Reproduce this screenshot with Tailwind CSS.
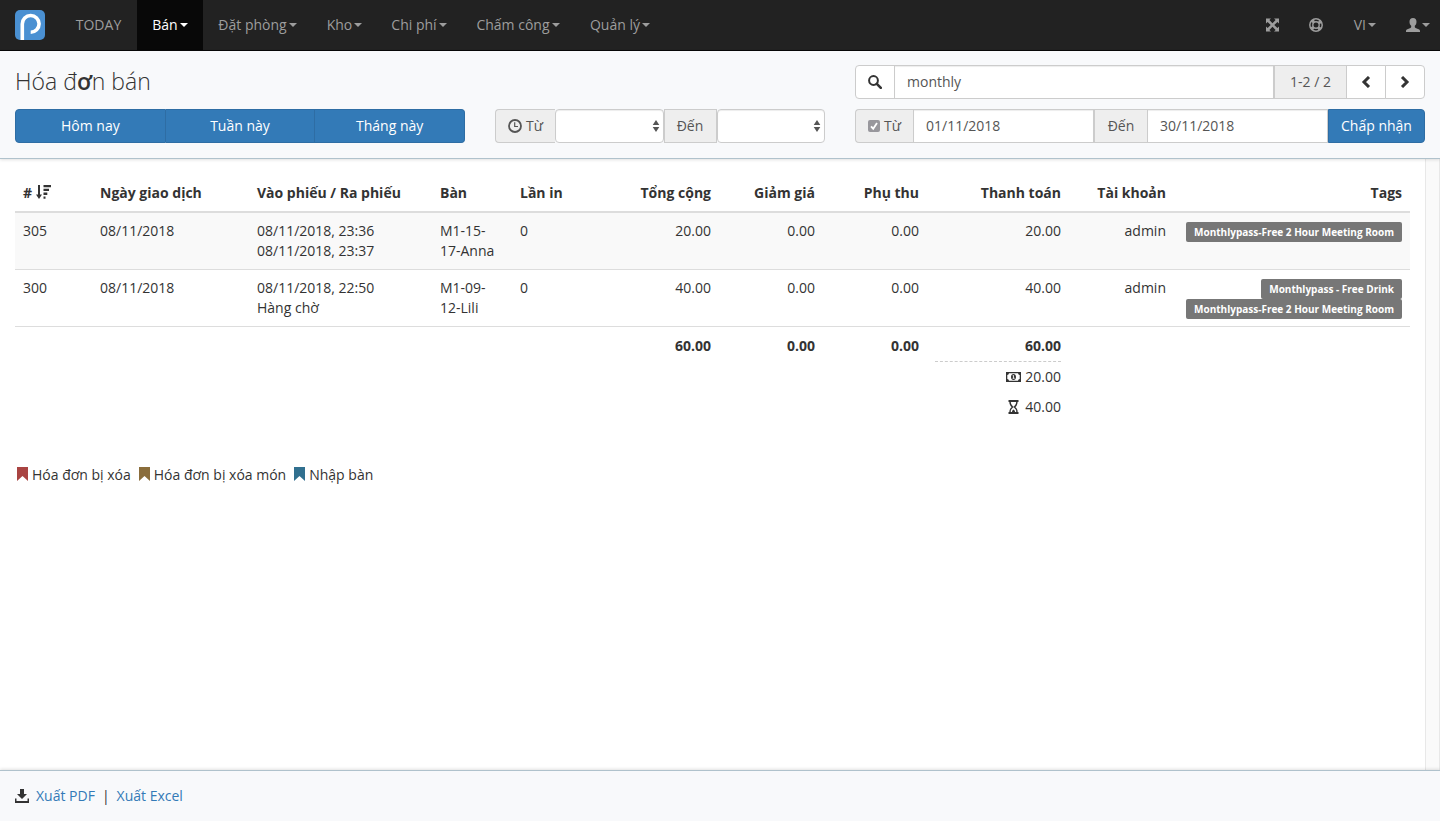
<!DOCTYPE html>
<html lang="vi">
<head>
<meta charset="utf-8">
<meta name="viewport" content="width=device-width, initial-scale=1">
<title>Hóa đơn bán</title>
<script src="https://cdn.jsdelivr.net/npm/@tailwindcss/browser@4"></script>
</head>
<body class="flex h-screen flex-col overflow-hidden bg-white font-['Open_Sans','Noto_Sans',sans-serif] text-sm leading-5 text-[#333]">
<svg class="hidden">
  <symbol id="caret" viewBox="0 0 8 4"><path d="M0 0h8L4 4z"/></symbol>
  <symbol id="sorter" viewBox="0 0 8 12"><path d="M4 0l3.3 5H.7zM.7 7h6.6L4 12z"/></symbol>
  <symbol id="bookmark" viewBox="0 0 11 14"><path d="M0 0h11v14L5.500 9 0 14z"/></symbol>
</svg>

<nav class="flex h-[51px] shrink-0 border-b border-[#080808] bg-[#222] text-[#9d9d9d]">
  <a href="#" class="px-[15px] py-2.5" aria-label="Trang chủ">
    <svg class="size-[30px]" viewBox="0 0 30 30"><rect width="30" height="30" rx="5" fill="#4a90d2"/><path d="M7.300 30V14a8.400 8.400 0 1 1 8.400 8.300" fill="none" stroke="#fff" stroke-width="3.600"/></svg>
  </a>
  <a href="#" class="flex h-[50px] w-[77px] items-center justify-center">TODAY</a>
  <a href="#" class="flex h-[50px] w-[66px] items-center justify-center gap-0.5 bg-[#080808] text-white">Bán<svg class="h-1 w-2 fill-current"><use href="#caret"/></svg></a>
  <a href="#" class="flex h-[50px] w-[109px] items-center justify-center gap-0.5">Đặt phòng<svg class="h-1 w-2 fill-current"><use href="#caret"/></svg></a>
  <a href="#" class="flex h-[50px] w-[65px] items-center justify-center gap-0.5">Kho<svg class="h-1 w-2 fill-current"><use href="#caret"/></svg></a>
  <a href="#" class="flex h-[50px] w-[84px] items-center justify-center gap-0.5">Chi phí<svg class="h-1 w-2 fill-current"><use href="#caret"/></svg></a>
  <a href="#" class="flex h-[50px] w-[114px] items-center justify-center gap-0.5">Chấm công<svg class="h-1 w-2 fill-current"><use href="#caret"/></svg></a>
  <a href="#" class="flex h-[50px] w-[90px] items-center justify-center gap-0.5">Quản lý<svg class="h-1 w-2 fill-current"><use href="#caret"/></svg></a>
  <div class="ml-auto flex h-[50px] items-center">
    <a href="#" class="px-[15px]" aria-label="Toàn màn hình"><svg class="h-3.5 w-[13px]" viewBox="0 0 13 13"><path fill="currentColor" d="M0 0h5L3.400 1.600 6.500 4.700l3.100-3.100L8 0h5v5l-1.600-1.600-3.100 3.100 3.100 3.100L13 8v5H8l1.600-1.600-3.100-3.100-3.100 3.100L5 13H0V8l1.600 1.600 3.100-3.100-3.100-3.100L0 5z"/></svg></a>
    <a href="#" class="px-[15px]" aria-label="Trợ giúp"><svg class="size-3.5" viewBox="0 0 14 14" fill="none" stroke="currentColor"><circle cx="7" cy="7" r="6.200" stroke-width="1.500"/><circle cx="7" cy="7" r="3.200" stroke-width="1.400"/><circle cx="7" cy="7" r="4.700" stroke-width="2.800" stroke-dasharray="3 4.383" stroke-dashoffset="-2.200"/></svg></a>
    <a href="#" class="flex w-[38px] items-center justify-end gap-0.5">VI<svg class="h-1 w-2 fill-current"><use href="#caret"/></svg></a>
    <a href="#" class="flex w-[64px] items-center justify-end gap-0.5 pr-2.5" aria-label="Tài khoản"><svg class="size-3.5 fill-current" viewBox="0 0 14 14"><path d="M7 0c2.300 0 3.500 1.600 3.500 3.700 0 1.700-.6 3.300-1.700 4.100v1.100c0 .5.300.8.800 1l3 1.300c.9.400 1.400.9 1.400 1.800v1H0v-1c0-.9.500-1.400 1.400-1.800l3-1.300c.5-.2.8-.5.8-1V7.800C4.100 7 3.500 5.400 3.500 3.700 3.500 1.600 4.700 0 7 0z"/></svg><svg class="h-1 w-2 fill-current"><use href="#caret"/></svg></a>
  </div>
</nav>

<header class="relative z-10 grid shrink-0 grid-cols-12 gap-y-2.5 border-b border-[#b0c2cc] bg-[#f8f9fb] pt-3.5 pb-[15px] shadow-[0_1px_3px_rgba(0,0,0,0.12)]">
  <h1 class="col-span-7 px-[15px] text-[23px] leading-8 font-light">Hóa đ<span class="font-semibold">ơ</span>n bán</h1>
  <div class="col-span-5 flex h-[34px] px-[15px]">
    <button class="flex w-10 items-center justify-center rounded-l border border-[#ccc] bg-white" aria-label="Tìm"><svg class="size-3.5" viewBox="0 0 14 14" fill="none" stroke="#333"><circle cx="5.500" cy="5.500" r="4.400" stroke-width="2"/><path d="M8.800 8.800l4 4" stroke-width="2.600" stroke-linecap="round"/></svg></button>
    <input aria-label="Từ khóa" value="monthly" class="-ml-px min-w-0 flex-1 border border-[#ccc] bg-white px-3 text-[#555] shadow-[inset_0_1px_1px_rgba(0,0,0,0.075)]">
    <span class="flex w-[72px] items-center justify-center border-y border-l border-[#ccc] bg-[#eee] text-[#555]">1-2 / 2</span>
    <button class="flex w-10 items-center justify-center border border-[#ccc] bg-white" aria-label="Trang trước"><svg class="h-3 w-2.5" viewBox="0 0 10 12" fill="none" stroke="#333" stroke-width="3"><path d="M8 1L3 6l5 5"/></svg></button>
    <button class="-ml-px flex w-10 items-center justify-center rounded-r border border-[#ccc] bg-white" aria-label="Trang sau"><svg class="h-3 w-2.5" viewBox="0 0 10 12" fill="none" stroke="#333" stroke-width="3"><path d="M2 1l5 5-5 5"/></svg></button>
  </div>
  <div class="col-span-4 flex h-[34px] px-[15px] text-white">
    <button class="flex-1 rounded-l border border-[#2e6da4] bg-[#337ab7]">Hôm nay</button>
    <button class="flex-1 border-y border-r border-[#2e6da4] bg-[#337ab7]">Tuần này</button>
    <button class="flex-1 rounded-r border-y border-r border-[#2e6da4] bg-[#337ab7]">Tháng này</button>
  </div>
  <div class="col-span-3 flex h-[34px] px-[15px] text-[#555]">
    <label for="hour-from" class="flex w-[60px] items-center justify-center gap-1 rounded-l border-y border-l border-[#ccc] bg-[#eee]"><svg class="size-3.5" viewBox="0 0 14 14" fill="none" stroke="currentColor"><circle cx="7" cy="7" r="6" stroke-width="1.800"/><path d="M6.700 3.200v4.300H10" stroke-width="1.200"/></svg>Từ</label>
    <div class="relative flex-1"><select id="hour-from" class="size-full appearance-none rounded border border-[#ccc] bg-white px-3 shadow-[inset_0_1px_1px_rgba(0,0,0,0.075)]"><option></option></select><svg class="pointer-events-none absolute top-[11px] right-1 h-3 w-2 fill-current"><use href="#sorter"/></svg></div>
    <label for="hour-to" class="flex w-[53px] items-center justify-center border border-[#ccc] bg-[#eee]">Đến</label>
    <div class="relative flex-1"><select id="hour-to" class="size-full appearance-none rounded border border-[#ccc] bg-white px-3 shadow-[inset_0_1px_1px_rgba(0,0,0,0.075)]"><option></option></select><svg class="pointer-events-none absolute top-[11px] right-1 h-3 w-2 fill-current"><use href="#sorter"/></svg></div>
  </div>
  <div class="col-span-5 flex h-[34px] px-[15px] text-[#555]">
    <div class="flex w-[58px] items-center justify-center gap-1 rounded-l border-y border-l border-[#ccc] bg-[#eee]">
      <span class="relative size-3"><input id="use-date" type="checkbox" checked class="block size-3 appearance-none rounded-xs bg-[#98979c]"><svg class="pointer-events-none absolute inset-0 size-3" viewBox="0 0 12 12"><path d="M3 6.300l2.200 2.400L9 3" fill="none" stroke="#fff" stroke-width="1.800"/></svg></span>
      <label for="use-date">Từ</label>
    </div>
    <input aria-label="Từ ngày" value="01/11/2018" class="min-w-0 flex-1 border border-[#ccc] bg-white px-3 shadow-[inset_0_1px_1px_rgba(0,0,0,0.075)]">
    <label for="date-to" class="flex w-[53px] items-center justify-center border-y border-l border-[#ccc] bg-[#eee]">Đến</label>
    <input id="date-to" value="30/11/2018" class="min-w-0 flex-1 border border-[#ccc] bg-white px-3 shadow-[inset_0_1px_1px_rgba(0,0,0,0.075)]">
    <button class="w-[97px] rounded-r border border-[#2e6da4] bg-[#337ab7] text-white">Chấp nhận</button>
  </div>
</header>

<div class="flex min-h-0 flex-1">
  <main class="min-w-0 flex-1 overflow-hidden px-[15px] pt-4">
    <table class="w-full table-fixed border-collapse text-right">
      <colgroup><col class="w-[77px]"><col class="w-[157px]"><col class="w-[183px]"><col class="w-[80px]"><col class="w-[105px]"><col class="w-[102px]"><col class="w-[104px]"><col class="w-[104px]"><col class="w-[142px]"><col class="w-[105px]"><col></colgroup>
      <thead>
        <tr class="border-b-2 border-[#ddd] *:p-2 *:font-bold *:whitespace-nowrap">
          <th class="text-left"><span class="flex gap-1"># <svg class="mt-0.5 h-3.5 w-[15px]" viewBox="0 0 15 14" fill="#333"><path d="M2 0h2v9.500h2L3 14 0 9.500h2zM7.500 0H15v2.300H7.500zM7.500 3.800h5.500v2.300H7.500zM7.500 7.600h3.800v2.300H7.500zM7.500 11.400h2v2.300h-2z"/></svg></span></th>
          <th class="text-left">Ngày giao dịch</th><th class="text-left">Vào phiếu / Ra phiếu</th><th class="text-left">Bàn</th><th class="text-left">Lần in</th>
          <th>Tổng cộng</th><th>Giảm giá</th><th>Phụ thu</th><th>Thanh toán</th><th>Tài khoản</th><th>Tags</th>
        </tr>
      </thead>
      <tbody>
        <tr class="border-b border-[#ddd] bg-[#f9f9f9] *:p-2 *:align-top">
          <td class="text-left">305</td><td class="text-left">08/11/2018</td><td class="text-left">08/11/2018, 23:36<br>08/11/2018, 23:37</td><td class="text-left">M1-15-<br><span class="whitespace-nowrap">17-Anna</span></td><td class="text-left">0</td>
          <td>20.00</td><td>0.00</td><td>0.00</td><td>20.00</td><td>admin</td>
          <td><div class="flex flex-col items-end pt-px"><span class="rounded-xs bg-[#777] px-2 text-[10px] leading-5 font-bold whitespace-nowrap text-white">Monthlypass-Free 2 Hour Meeting Room</span></div></td>
        </tr>
        <tr class="border-b border-[#ddd] *:p-2 *:align-top">
          <td class="text-left">300</td><td class="text-left">08/11/2018</td><td class="text-left">08/11/2018, 22:50<br>Hàng chờ</td><td class="text-left">M1-09-<br><span class="whitespace-nowrap">12-Lili</span></td><td class="text-left">0</td>
          <td>40.00</td><td>0.00</td><td>0.00</td><td>40.00</td><td>admin</td>
          <td><div class="-mb-px flex flex-col items-end pt-px"><span class="rounded-xs bg-[#777] px-2 text-[10px] leading-5 font-bold whitespace-nowrap text-white">Monthlypass - Free Drink</span><span class="rounded-xs bg-[#777] px-2 text-[10px] leading-5 font-bold whitespace-nowrap text-white">Monthlypass-Free 2 Hour Meeting Room</span></div></td>
        </tr>
      </tbody>
      <tfoot>
        <tr class="*:px-2 *:py-[9px] *:align-top">
          <td colspan="5"></td><td class="font-bold">60.00</td><td class="font-bold">0.00</td><td class="font-bold">0.00</td>
          <td>
            <div class="border-b border-dashed border-[#ccc] pb-[5px] font-bold">60.00</div>
            <div class="flex h-[30px] items-center justify-end gap-1"><svg class="h-3 w-[15px]" viewBox="0 0 15 10" fill="#333"><path fill-rule="evenodd" d="M0 0h15v10H0zM3 1.300A2 2 0 0 1 1.300 3v4A2 2 0 0 1 3 8.700h9A2 2 0 0 1 13.700 7V3A2 2 0 0 1 12 1.300z"/><path fill-rule="evenodd" d="M7.500 2C9 2 10 3.300 10 5S9 8 7.500 8 5 6.700 5 5s1-3 2.500-3zm-.8 1.200v1h.5v1.600h-.6v.9h2v-.9H8V3.200z"/></svg>20.00</div>
            <div class="flex h-[30px] items-center justify-end gap-1.5"><svg class="h-3.5 w-[11px]" viewBox="0 0 11 14" fill="none" stroke="#333"><path d="M.5 1h10M.5 13h10" stroke-width="2"/><path d="M2 1.500c0 3 .5 4 2.600 5.500C2.500 8.500 2 9.500 2 12.500M9 1.500c0 3-.5 4-2.600 5.500C8.500 8.500 9 9.500 9 12.500" stroke-width="1.400"/><path d="M4 12c0-1.500.7-2 1.500-2.500C6.300 10 7 10.500 7 12z" fill="#333" stroke="none"/></svg>40.00</div>
          </td>
          <td></td><td></td>
        </tr>
      </tfoot>
    </table>
    <div class="mt-[34px] flex gap-2 pl-0.5">
      <span class="flex gap-1"><svg class="mt-0.5 h-3.5 w-[11px] fill-[#a94442]"><use href="#bookmark"/></svg>Hóa đơn bị xóa</span>
      <span class="flex gap-1"><svg class="mt-0.5 h-3.5 w-[11px] fill-[#8a6d3b]"><use href="#bookmark"/></svg>Hóa đơn bị xóa món</span>
      <span class="flex gap-1"><svg class="mt-0.5 h-3.5 w-[11px] fill-[#31708f]"><use href="#bookmark"/></svg>Nhập bàn</span>
    </div>
  </main>
  <div class="w-[15px] shrink-0 border-x border-[#e8e8e8] bg-[#fafafa]"></div>
</div>

<footer class="relative z-10 flex h-[51px] shrink-0 items-center border-t border-[#b0c2cc] bg-[#f8f9fb] px-[15px] shadow-[0_-1px_3px_rgba(0,0,0,0.12)]">
  <svg class="mr-[7px] h-3.5 w-[14px]" viewBox="0 0 14 14" fill="#333"><path d="M5 0h4v5h3L7 10 2 5h3zM0 9.500h1.500V12h11V9.500H14V14H0z"/></svg>
  <a href="#" class="text-[#337ab7]">Xuất PDF</a><span class="px-[7px]">|</span><a href="#" class="text-[#337ab7]">Xuất Excel</a>
</footer>
</body>
</html>
